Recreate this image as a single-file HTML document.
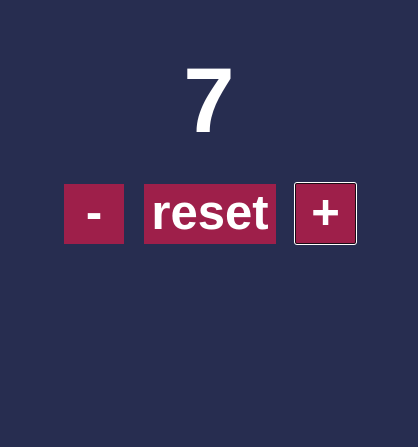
<!DOCTYPE html>
<html><head><style>
html,body{margin:0;padding:0;}
body{width:418px;height:447px;background:#272d50;position:relative;overflow:hidden;font-family:"Liberation Sans",Arial,sans-serif;font-weight:bold;color:#fff;}
.n{position:absolute;left:0;width:418px;top:51px;text-align:center;font-size:92px;line-height:100px;}
.b{position:absolute;background:#9e1f4a;text-align:center;font-size:49px;line-height:59px;}
</style></head><body>
<div class="n">7</div>
<div class="b" style="left:64px;top:184px;width:60px;height:60px;">-</div>
<div class="b" style="left:144px;top:184px;width:132px;height:60px;">reset</div>
<div class="b" style="left:294px;top:182px;width:61px;height:61px;border:1px solid #fff;border-radius:3px;box-shadow:inset 0 0 0 1px #1a0a14;line-height:61px;">+</div>
</body></html>
